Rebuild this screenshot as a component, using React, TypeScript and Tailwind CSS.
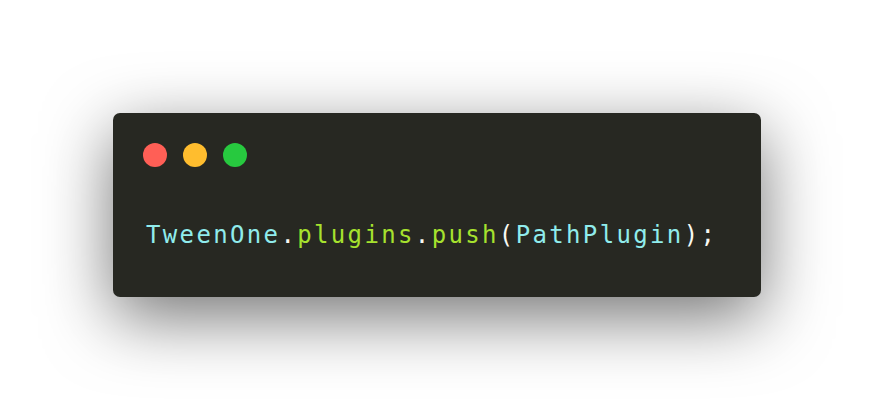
export default function App() {
  return (
    <div className="min-h-[410px] w-[874px] bg-white pl-[113px] pt-[113px]">
      <div className="h-[184px] w-[648px] rounded-[7px] bg-[#272822] pl-[30px] shadow-[0_20px_68px_rgba(0,0,0,0.55)]">
        <div className="flex gap-4 pt-[30px]">
          <span className="h-6 w-6 rounded-full bg-[#ff5f56]" />
          <span className="h-6 w-6 rounded-full bg-[#ffbd2e]" />
          <span className="h-6 w-6 rounded-full bg-[#27c93f]" />
        </div>
        {/* code line */}
        <pre className="mt-[52px] pl-[3px] text-[24px] leading-[32px] tracking-[2.35px] text-[#f8f8f2] [font-family:'DejaVu_Sans_Mono',monospace]">
          <span className="text-[#90ecec]">TweenOne</span>.
          <span className="text-[#a6e22e]">plugins</span>.
          <span className="text-[#a6e22e]">push</span>(
          <span className="text-[#90ecec]">PathPlugin</span>);
        </pre>
      </div>
    </div>
  );
}
